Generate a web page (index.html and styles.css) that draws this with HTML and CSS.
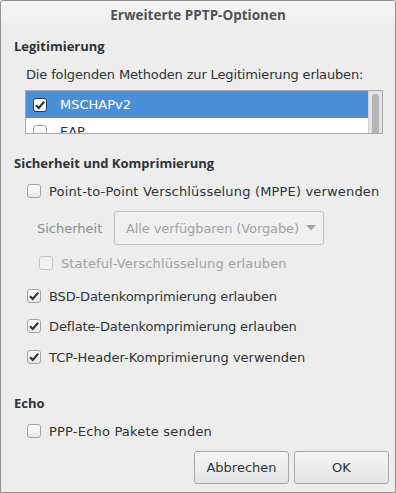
FILE: index.html
```html
<!DOCTYPE html>
<html>
<head>
<meta charset="utf-8">
<link rel="stylesheet" href="styles.css">
</head>
<body>
<div class="window">
  <div class="titlebar">Erweiterte PPTP-Optionen</div>
  <div class="content">
    <div class="heading h-legit">Legitimierung</div>
    <div class="label-row">Die folgenden Methoden zur Legitimierung erlauben:</div>
    <div class="listbox">
      <div class="list-rows">
        <div class="list-row selected">
          <span class="check list-check"><svg viewBox="0 0 14 14" width="14" height="14"><path d="M3 7.2 L5.8 10 L11.2 3.6" fill="none" stroke="#2e3436" stroke-width="2.2"/></svg></span>
          <span>MSCHAPv2</span>
        </div>
        <div class="list-row">
          <span class="check"></span>
          <span>EAP</span>
        </div>
      </div>
      <div class="scrollbar"><div class="slider"></div></div>
    </div>

    <div class="heading h-sec">Sicherheit und Komprimierung</div>
    <div class="opt opt-p2p"><span class="check"></span><span class="t-wide">Point-to-Point Verschlüsselung (MPPE) verwenden</span></div>
    <div class="combo-row">
      <span class="combo-label">Sicherheit</span>
      <div class="combo"><span class="combo-text">Alle verfügbaren (Vorgabe)</span><svg class="arrow" viewBox="0 0 10 6" width="10" height="6"><path d="M0 0 L10 0 L5 5.5 Z" fill="#a3a6a7"/></svg></div>
    </div>
    <div class="opt opt-state disabled"><span class="check dis"></span><span class="t-wide2">Stateful-Verschlüsselung erlauben</span></div>
    <div class="opt opt-bsd"><span class="check"><svg viewBox="0 0 14 14" width="14" height="14"><path d="M3 7.2 L5.8 10 L11.2 3.6" fill="none" stroke="#2e3436" stroke-width="2.2"/></svg></span><span class="t-narrow">BSD-Datenkomprimierung erlauben</span></div>
    <div class="opt opt-next"><span class="check"><svg viewBox="0 0 14 14" width="14" height="14"><path d="M3 7.2 L5.8 10 L11.2 3.6" fill="none" stroke="#2e3436" stroke-width="2.2"/></svg></span><span class="t-narrow">Deflate-Datenkomprimierung erlauben</span></div>
    <div class="opt opt-next2"><span class="check"><svg viewBox="0 0 14 14" width="14" height="14"><path d="M3 7.2 L5.8 10 L11.2 3.6" fill="none" stroke="#2e3436" stroke-width="2.2"/></svg></span><span>TCP-Header-Komprimierung verwenden</span></div>

    <div class="heading h-echo">Echo</div>
    <div class="opt opt-echo"><span class="check"></span><span class="t-wide3">PPP-Echo Pakete senden</span></div>

    <div class="buttons">
      <button class="btn">Abbrechen</button>
      <button class="btn">OK</button>
    </div>
  </div>
</div>
</body>
</html>
```

FILE: styles.css
```css
html, body {
  margin: 0;
  padding: 0;
  background: #ededed;
}
.window {
  box-sizing: border-box;
  width: 396px;
  height: 493px;
  border: 1px solid #8f9192;
  border-radius: 3px 3px 0 0;
  background: #ededed;
  font-family: "DejaVu Sans", sans-serif;
  font-size: 13px;
  color: #2e3436;
  display: flex;
  flex-direction: column;
  white-space: nowrap;
}
.titlebar {
  height: 27px;
  display: flex;
  align-items: center;
  justify-content: center;
  font-family: "Open Sans", sans-serif;
  font-weight: 700;
  font-size: 13.5px;
  color: #4c5456;
  background: linear-gradient(#f6f6f6, #ededed);
  border-radius: 3px 3px 0 0;
}
.content {
  display: flex;
  flex-direction: column;
  padding: 0 12px 0 13px;
}
.heading {
  height: 20px;
  display: flex;
  align-items: center;
  font-family: "Open Sans", sans-serif;
  font-weight: 700;
  font-size: 13px;
  color: #2e3436;
}
.h-legit { margin-top: 8px; }
.label-row {
  height: 20px;
  display: flex;
  align-items: center;
  margin-top: 8px;
  padding-left: 12px;
  letter-spacing: -0.15px;
}
.listbox {
  margin: 6px 0 0 11px;
  height: 44px;
  box-sizing: border-box;
  border: 1px solid #a6a8a9;
  background: #fff;
  display: flex;
  overflow: hidden;
}
.list-rows {
  flex: 1;
  display: flex;
  flex-direction: column;
}
.list-row {
  height: 27px;
  flex: none;
  display: flex;
  align-items: center;
  padding-left: 7px;
  gap: 13px;
  color: #2e3436;
}
.list-row.selected {
  background: #4a90d9;
  color: #fff;
}
.scrollbar {
  width: 13px;
  background: #e3e3e3;
  border-left: 1px solid #d2d2d2;
  display: flex;
  justify-content: center;
  padding-top: 3px;
}
.slider {
  width: 7px;
  height: 50px;
  border-radius: 4px;
  background: #b3b5b6;
}
.check {
  box-sizing: border-box;
  width: 14px;
  height: 14px;
  flex: none;
  border: 1px solid #a1a4a5;
  border-radius: 3px;
  background: linear-gradient(#ffffff, #e6e6e6);
  display: flex;
  align-items: center;
  justify-content: center;
}
.check svg {
  display: block;
  margin: -1px;
}
.list-check {
  border-color: #2a3d55;
  background: linear-gradient(#ffffff, #eaeaea);
}
.check.dis {
  background: #f2f2f2;
  border-color: #c3c5c6;
}
.h-sec { margin-top: 19px; }
.opt {
  height: 20px;
  display: flex;
  align-items: center;
  gap: 8px;
  padding-left: 13px;
}
.t-wide { letter-spacing: 0.17px; }
.t-wide2 { letter-spacing: 0.12px; }
.t-wide3 { letter-spacing: 0.2px; }
.t-narrow { letter-spacing: -0.13px; }
.opt-p2p { margin-top: 8px; }
.combo-row {
  margin-top: 10px;
  height: 34px;
  display: flex;
  align-items: center;
  padding-left: 23px;
}
.combo-label {
  color: #8b8e8f;
  width: 77px;
  flex: none;
}
.combo {
  box-sizing: border-box;
  width: 210px;
  flex: none;
  height: 34px;
  border: 1px solid #bfc1c2;
  border-radius: 3px;
  background: #f0f0f0;
  display: flex;
  align-items: center;
  gap: 7px;
  padding: 0 8px 0 11px;
  color: #a0a3a4;
}
.combo-text { flex: none; letter-spacing: -0.1px; }
.arrow { display: block; flex: none; }
.opt-state {
  margin-top: 8px;
  padding-left: 25px;
  color: #a0a3a4;
}
.opt-bsd { margin-top: 13px; }
.opt-next { margin-top: 10px; }
.opt-next2 { margin-top: 11px; }
.h-echo { margin-top: 26px; }
.opt-echo { margin-top: 8px; }
.buttons {
  margin-top: 10px;
  margin-right: -6px;
  display: flex;
  justify-content: flex-end;
  gap: 5px;
}
.btn {
  box-sizing: border-box;
  width: 95px;
  height: 33px;
  border: 1px solid #a6a8a9;
  border-radius: 3px;
  background: linear-gradient(#f6f6f6, #e4e4e4);
  font-family: "DejaVu Sans", sans-serif;
  font-size: 13px;
  color: #2e3436;
  padding: 0;
}
```
